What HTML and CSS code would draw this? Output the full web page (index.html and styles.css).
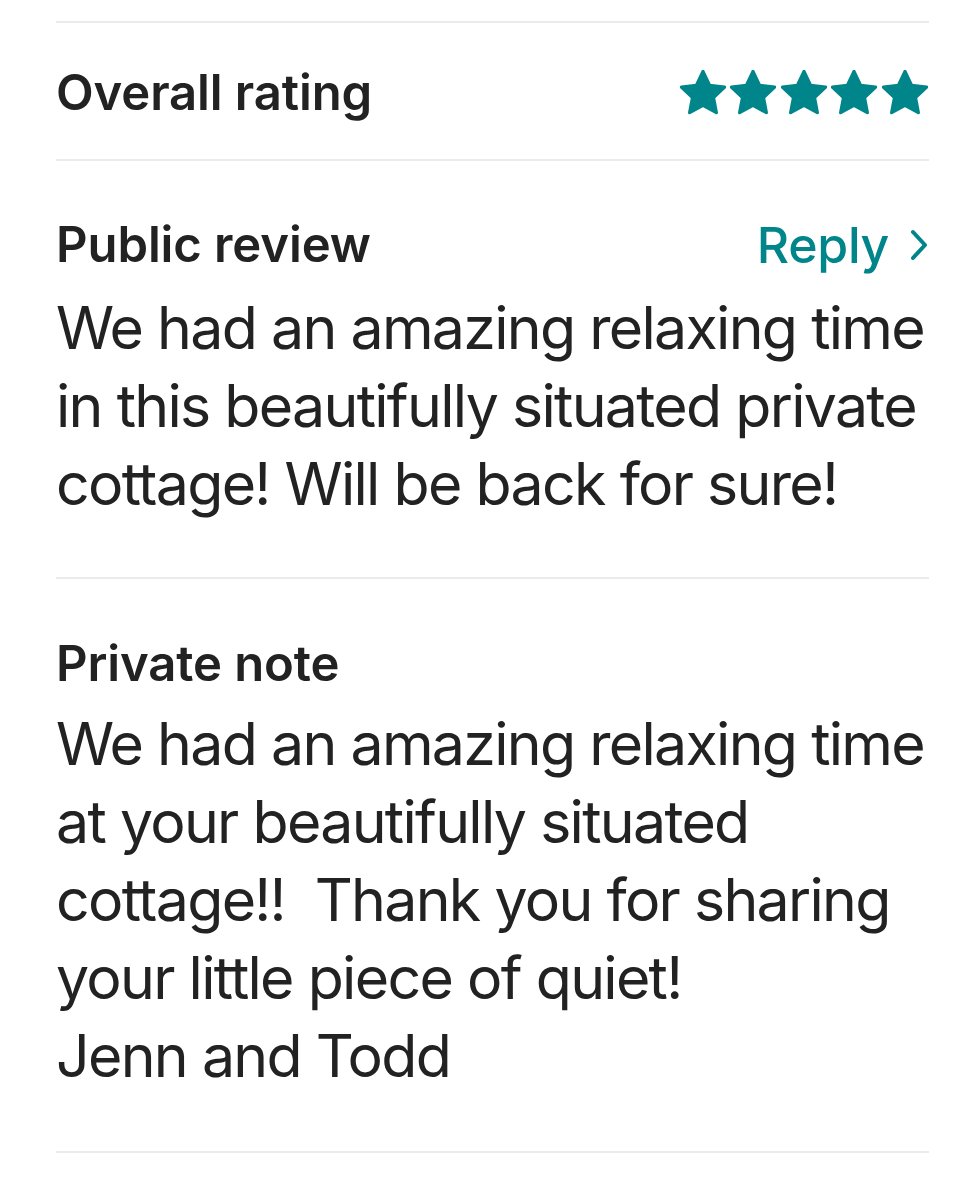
FILE: index.html
```html
<!DOCTYPE html>
<html lang="en">
<head>
<meta charset="utf-8">
<title>Review</title>
<link rel="stylesheet" href="styles.css">
</head>
<body>
<main class="page">
  <hr class="divider">
  <section class="rating-row">
    <h2 class="heading">Overall rating</h2>
    <div class="stars" aria-label="5 stars">
      <svg class="star" viewBox="2 2 20 20"><path d="M12 2.6l2.85 6.05 6.55.8-4.83 4.55 1.24 6.55L12 17.35l-5.81 3.2 1.24-6.55L2.6 9.45l6.55-.8z"/></svg>
      <svg class="star" viewBox="2 2 20 20"><path d="M12 2.6l2.85 6.05 6.55.8-4.83 4.55 1.24 6.55L12 17.35l-5.81 3.2 1.24-6.55L2.6 9.45l6.55-.8z"/></svg>
      <svg class="star" viewBox="2 2 20 20"><path d="M12 2.6l2.85 6.05 6.55.8-4.83 4.55 1.24 6.55L12 17.35l-5.81 3.2 1.24-6.55L2.6 9.45l6.55-.8z"/></svg>
      <svg class="star" viewBox="2 2 20 20"><path d="M12 2.6l2.85 6.05 6.55.8-4.83 4.55 1.24 6.55L12 17.35l-5.81 3.2 1.24-6.55L2.6 9.45l6.55-.8z"/></svg>
      <svg class="star" viewBox="2 2 20 20"><path d="M12 2.6l2.85 6.05 6.55.8-4.83 4.55 1.24 6.55L12 17.35l-5.81 3.2 1.24-6.55L2.6 9.45l6.55-.8z"/></svg>
    </div>
  </section>
  <hr class="divider">
  <section class="block block-public">
    <div class="block-head">
      <h2 class="heading">Public review</h2>
      <a class="reply" href="#">Reply
        <svg class="chev" viewBox="0 0 20 34"><polyline points="4,4 16,17 4,30"/></svg>
      </a>
    </div>
    <p class="body-text"><span class="line">We had an amazing relaxing time</span><span class="line">in this beautifully situated private</span><span class="line">cottage! Will be back for sure!</span></p>
  </section>
  <hr class="divider">
  <section class="block block-private">
    <div class="block-head">
      <h2 class="heading">Private note</h2>
    </div>
    <p class="body-text"><span class="line">We had an amazing relaxing time</span><span class="line">at your beautifully situated</span><span class="line">cottage!!&nbsp; Thank you for sharing</span><span class="line">your little piece of quiet!</span><span class="line">Jenn and Todd</span></p>
  </section>
  <hr class="divider">
</main>
</body>
</html>
```

FILE: styles.css
```css
html, body {
  margin: 0;
  padding: 0;
  background: #ffffff;
}

body {
  font-family: Inter, "Noto Sans", sans-serif;
  color: #222222;
  -webkit-font-smoothing: antialiased;
}

.page {
  padding: 21px 31px 0 56px;
}

.divider {
  border: 0;
  height: 2px;
  margin: 0;
  background: #ebebeb;
}

.heading {
  margin: 0;
  font-size: 49px;
  line-height: 56px;
  font-weight: 600;
  letter-spacing: -0.1px;
}

.rating-row {
  display: flex;
  align-items: center;
  justify-content: space-between;
  padding: 42px 0 38px;
}

.stars {
  display: flex;
  gap: 4.6px;
  margin-right: 1px;
}

.star {
  width: 46px;
  height: 46px;
  display: block;
}

.star path {
  fill: #00858a;
  stroke: #00858a;
  stroke-width: 1.4;
  stroke-linejoin: round;
}

.block {
  padding: 56px 0 54px;
}

.block-private {
  padding-top: 57px;
  padding-bottom: 56px;
}

.block-head {
  display: flex;
  align-items: center;
  justify-content: space-between;
}

.reply {
  display: flex;
  align-items: center;
  gap: 20px;
  color: #00858a;
  text-decoration: none;
  font-size: 50px;
  line-height: 56px;
  font-weight: 500;
  letter-spacing: -0.3px;
}

.chev {
  width: 20px;
  height: 34px;
  display: block;
}

.chev polyline {
  fill: none;
  stroke: #00858a;
  stroke-width: 4;
  stroke-linecap: round;
  stroke-linejoin: round;
}

.body-text {
  margin: 16px 0 0;
  font-size: 59px;
  line-height: 78px;
  font-weight: 400;
  letter-spacing: -1.7px;
}

.line {
  display: block;
  white-space: nowrap;
}

.block-private .body-text {
  margin-top: 13px;
}
```
